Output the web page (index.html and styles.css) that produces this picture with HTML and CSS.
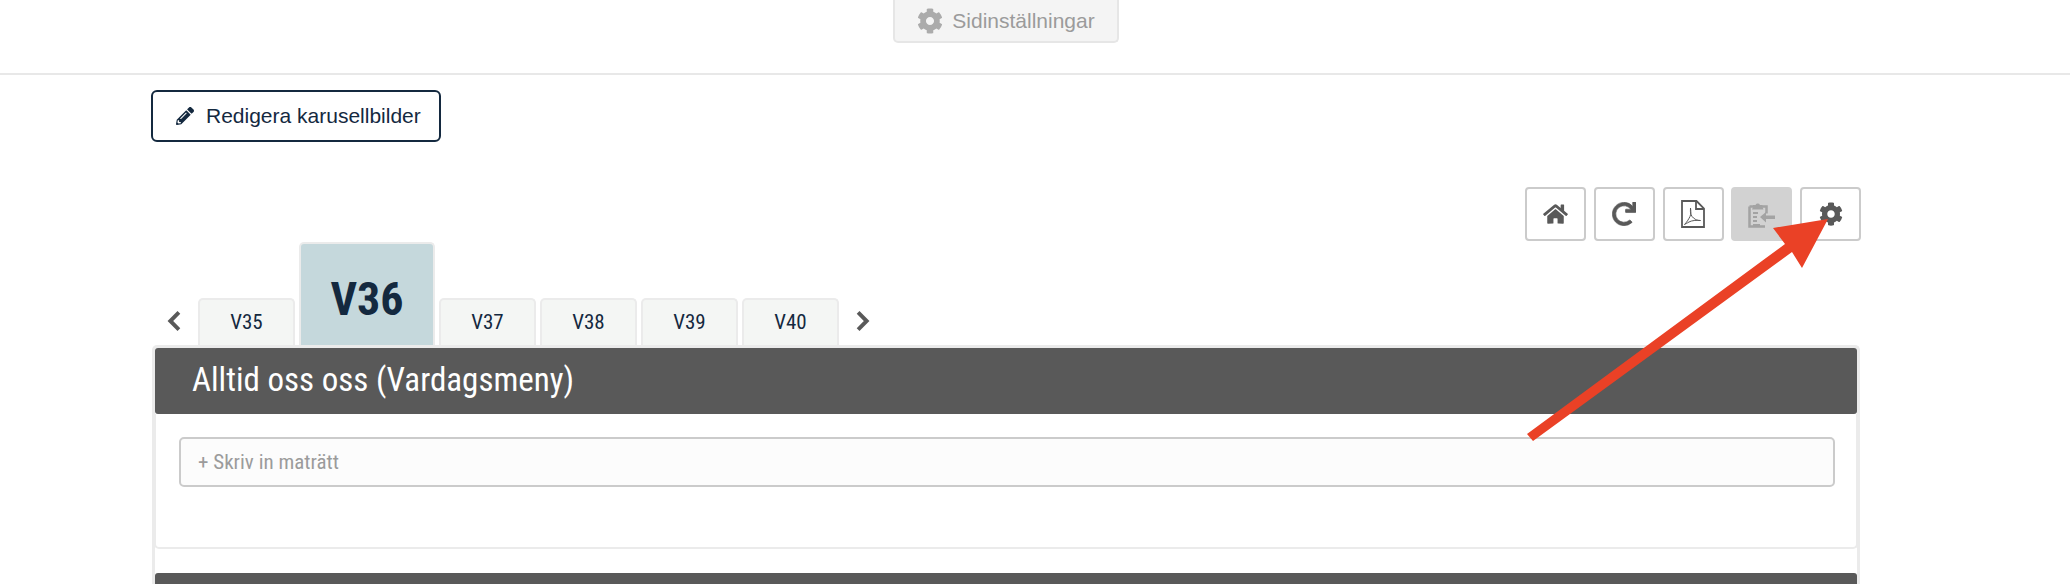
FILE: index.html
```html
<!DOCTYPE html>
<html lang="en">
  <head>
    <meta charset="UTF-8" />
    <title>Sidinställningar</title>
    <link rel="stylesheet" href="styles.css">
  </head>
  <body>
    <div class="topbar">
      <button class="settings-btn">
        <svg class="cog" viewBox="0 0 512 512"><path d="M487.4 315.7l-42.6-24.6c4.3-23.2 4.3-47 0-70.2l42.6-24.6c4.9-2.8 7.1-8.6 5.5-14-11.1-35.6-30-67.8-54.7-94.6-3.8-4.1-10-5.1-14.8-2.3L380.8 110c-17.9-15.4-38.5-27.3-60.8-35.1V25.8c0-5.6-3.9-10.5-9.4-11.7-36.7-8.2-74.3-7.8-109.2 0-5.5 1.2-9.4 6.1-9.4 11.7V75c-22.2 7.9-42.8 19.8-60.8 35.1L88.7 85.5c-4.9-2.8-11-1.9-14.8 2.3-24.7 26.7-43.6 58.9-54.7 94.6-1.7 5.4.6 11.2 5.5 14L67.3 221c-4.3 23.2-4.3 47 0 70.2l-42.6 24.6c-4.9 2.8-7.1 8.6-5.5 14 11.1 35.6 30 67.8 54.7 94.6 3.8 4.1 10 5.1 14.8 2.3l42.6-24.6c17.9 15.4 38.5 27.3 60.8 35.1v49.2c0 5.6 3.9 10.5 9.4 11.7 36.7 8.2 74.3 7.8 109.2 0 5.5-1.2 9.4-6.1 9.4-11.7v-49.2c22.2-7.9 42.8-19.8 60.8-35.1l42.6 24.6c4.9 2.8 11 1.9 14.8-2.3 24.7-26.7 43.6-58.9 54.7-94.6 1.5-5.5-.7-11.3-5.6-14.1zM256 336c-44.1 0-80-35.9-80-80s35.9-80 80-80 80 35.9 80 80-35.9 80-80 80z"/></svg>
        Sidinställningar
      </button>
    </div>

    <div class="content">
      <button class="edit-btn">
        <svg class="pencil" viewBox="0 0 512 512"><path d="M497.9 142.1l-46.1 46.1c-4.7 4.7-12.3 4.7-17 0l-111-111c-4.7-4.7-4.7-12.3 0-17l46.1-46.1c18.7-18.7 49.1-18.7 67.9 0l60.1 60.1c18.8 18.7 18.8 49.1 0 67.9zM284.2 99.8L21.6 362.4.4 483.9c-2.9 16.4 11.4 30.6 27.8 27.8l121.5-21.3 262.6-262.6c4.7-4.7 4.7-12.3 0-17l-111-111c-4.8-4.7-12.4-4.7-17.1 0zM124.1 339.9c-5.5-5.5-5.5-14.3 0-19.8l154-154c5.5-5.5 14.3-5.5 19.8 0s5.5 14.3 0 19.8l-154 154c-5.5 5.5-14.3 5.5-19.8 0zM88 424h48v36.3l-64.5 11.3-31.1-31.1L51.7 376H88v48z"/></svg>
        Redigera karusellbilder
      </button>

      <div class="tools">
        <button class="tool">
          <svg class="ico-home" viewBox="0 0 576 512"><path d="M280.37 148.26L96 300.11V464a16 16 0 0 0 16 16l112.06-.29a16 16 0 0 0 15.92-16V368a16 16 0 0 1 16-16h64a16 16 0 0 1 16 16v95.64a16 16 0 0 0 16 16.05L464 480a16 16 0 0 0 16-16V300L295.67 148.26a12.19 12.19 0 0 0-15.3 0zM571.6 251.47L488 182.56V44.05a12 12 0 0 0-12-12h-56a12 12 0 0 0-12 12v72.61L318.47 43a48 48 0 0 0-61 0L4.34 251.47a12 12 0 0 0-1.6 16.9l25.5 31A12 12 0 0 0 45.15 301l235.22-193.74a12.19 12.19 0 0 1 15.3 0L530.9 301a12 12 0 0 0 16.9-1.6l25.5-31a12 12 0 0 0-1.7-16.93z"/></svg>
        </button>
        <button class="tool">
          <svg class="ico-redo" viewBox="0 0 512 512"><path d="M500.33 0h-47.41a12 12 0 0 0-12 12.57l4 82.76A247.42 247.42 0 0 0 256 8C119.34 8 8.9 119.53 8 256.19 7.1 393.07 118.08 504 256 504a247.1 247.1 0 0 0 166.18-63.91 12 12 0 0 0 .48-17.43l-34-34a12 12 0 0 0-16.38-.55A176 176 0 1 1 402.1 157.8l-101.53-4.87a12 12 0 0 0-12.57 12v47.41a12 12 0 0 0 12 12h200.33a12 12 0 0 0 12-12V12a12 12 0 0 0-12-12z"/></svg>
        </button>
        <button class="tool">
          <svg class="ico-pdf" viewBox="0 0 24 28">
            <path class="pdf-page" d="M1 1h14.500l7.500 7.500V27H1z"/>
            <path class="pdf-page" d="M15 1v8h8"/>
            <path class="pdf-mark" d="M9.500 8c-.5 5 .5 8 3 10s4 2.500 7 2.500c-4-.5-9 0-11.500 1.500-2 1.200-3.500 2-4.500 2.500 2-2 4-5 5.500-8 1-2.500 1-5 .5-8.500z"/>
          </svg>
        </button>
        <button class="tool tool-active">
          <svg class="ico-clip" viewBox="0 0 27 27">
            <path class="clip-line" d="M1.500 5.500h17v7M17 25.500H1.500v-20"/>
            <path class="clip-fill" d="M5 6V4h2.500a2.500 2.500 0 0 1 4.500 0h2.500v2l1 2.500H4z"/>
            <path class="clip-line clip-thin" d="M5 12h5M5 16h4M5 20h4M5 24h7"/>
            <path class="clip-fill" d="M12 16l6-5v3.500h9v3.500h-9v3.500z"/>
          </svg>
        </button>
        <button class="tool">
          <svg class="ico-cog" viewBox="0 0 512 512"><path d="M487.4 315.7l-42.6-24.6c4.3-23.2 4.3-47 0-70.2l42.6-24.6c4.9-2.8 7.1-8.6 5.5-14-11.1-35.6-30-67.8-54.7-94.6-3.8-4.1-10-5.1-14.8-2.3L380.8 110c-17.9-15.4-38.5-27.3-60.8-35.1V25.8c0-5.6-3.9-10.5-9.4-11.7-36.7-8.2-74.3-7.8-109.2 0-5.5 1.2-9.4 6.1-9.4 11.7V75c-22.2 7.9-42.8 19.8-60.8 35.1L88.7 85.5c-4.9-2.8-11-1.9-14.8 2.3-24.7 26.7-43.6 58.9-54.7 94.6-1.7 5.4.6 11.2 5.5 14L67.3 221c-4.3 23.2-4.3 47 0 70.2l-42.6 24.6c-4.9 2.8-7.1 8.6-5.5 14 11.1 35.6 30 67.8 54.7 94.6 3.8 4.1 10 5.1 14.8 2.3l42.6-24.6c17.9 15.4 38.5 27.3 60.8 35.1v49.2c0 5.6 3.9 10.5 9.4 11.7 36.7 8.2 74.3 7.8 109.2 0 5.5-1.2 9.4-6.1 9.4-11.7v-49.2c22.2-7.9 42.8-19.8 60.8-35.1l42.6 24.6c4.9 2.8 11 1.9 14.8-2.3 24.7-26.7 43.6-58.9 54.7-94.6 1.5-5.5-.7-11.3-5.6-14.1zM256 336c-44.1 0-80-35.9-80-80s35.9-80 80-80 80 35.9 80 80-35.9 80-80 80z"/></svg>
        </button>
      </div>

      <div class="weeks">
        <svg class="chev" viewBox="0 0 14 18"><path d="M11 2L4 9l7 7"/></svg>
        <div class="week">V35</div>
        <div class="week week-current">V36</div>
        <div class="week">V37</div>
        <div class="week">V38</div>
        <div class="week">V39</div>
        <div class="week">V40</div>
        <svg class="chev chev-next" viewBox="0 0 14 18"><path d="M3 2l7 7-7 7"/></svg>
      </div>

      <div class="menus">
        <div class="menu">
          <h2 class="menu-title">Alltid oss oss (Vardagsmeny)</h2>
          <div class="menu-body">
            <input class="dish" type="text" placeholder="+ Skriv in maträtt">
          </div>
        </div>
        <div class="menu">
          <h2 class="menu-title"></h2>
        </div>
      </div>
    </div>

    <!-- arrow drawn on top of the screenshot -->
    <svg class="arrow" viewBox="0 0 2070 584"><polygon points="1527,434 1533,441 1792,252 1802,268 1828,219 1773,228 1785,244"/></svg>
  </body>
</html>
```

FILE: styles.css
```css
* {
  margin: 0;
  padding: 0;
  box-sizing: border-box;
}

html, body {
  height: 100%;
  overflow: hidden;
}

body {
  background: #fff;
  font-family: "Liberation Sans", Arial, sans-serif;
  position: relative;
}

button {
  font-family: inherit;
  cursor: pointer;
}

.topbar {
  height: 75px;
  padding-right: 58px;
  border-bottom: 2px solid #e8e8e8;
  display: flex;
  justify-content: center;
}

.settings-btn {
  width: 226px;
  height: 43px;
  background: #f4f4f4;
  border: 2px solid #e6e6e6;
  border-top: 0;
  border-radius: 0 0 5px 5px;
  color: #9b9b9b;
  font-size: 21px;
  display: flex;
  align-items: center;
  justify-content: center;
  gap: 9px;
}

.cog {
  width: 26px;
  height: 26px;
  fill: #ababab;
}

.content {
  padding: 15px 209px 0 151px;
}

.edit-btn {
  width: 290px;
  height: 52px;
  padding-left: 23px;
  background: #fff;
  border: 2px solid #14293f;
  border-radius: 6px;
  color: #14293f;
  font-size: 21px;
  display: flex;
  align-items: center;
  gap: 12px;
}

.pencil {
  width: 18px;
  height: 18px;
  fill: #14293f;
}

.tools {
  display: flex;
  justify-content: flex-end;
  gap: 7.75px;
  margin-top: 45px;
}

.tool {
  width: 61px;
  height: 54px;
  background: #fff;
  border: 2px solid #cbcbcb;
  border-radius: 4px;
  display: flex;
  align-items: center;
  justify-content: center;
  fill: #595959;
}

.tool-active {
  background: #d2d2d2;
  border-color: #d2d2d2;
}

.ico-home { width: 25px; height: 22px; }
.ico-redo { width: 24px; height: 24px; stroke: #595959; stroke-width: 14; }
.ico-pdf { width: 24px; height: 28px; }
.ico-clip { width: 27px; height: 27px; }
.ico-cog { width: 24px; height: 24px; }

.pdf-page {
  fill: none;
  stroke: #595959;
  stroke-width: 1.8;
}

.pdf-mark {
  fill: none;
  stroke: #595959;
  stroke-width: 1;
}

.clip-line {
  fill: none;
  stroke: #a3a3a3;
  stroke-width: 2.500;
}

.clip-thin {
  stroke-width: 1.800;
}

.clip-fill {
  fill: #a3a3a3;
}

.weeks {
  display: flex;
  align-items: flex-end;
  gap: 4px;
  height: 103px;
  margin-top: 1px;
  padding-left: 12px;
}

.chev {
  width: 22px;
  height: 22px;
  margin: 0 9px 13px 0;
  fill: none;
  stroke: #595959;
  stroke-width: 3.2;
}

.chev-next {
  margin: 0 0 13px 9px;
}

.week {
  width: 97px;
  height: 47px;
  padding-top: 10px;
  background: #f4f6f4;
  border: 2px solid #ebebeb;
  border-bottom: 0;
  border-radius: 5px 5px 0 0;
  color: #14293f;
  font-family: Roboto, sans-serif;
  font-stretch: condensed;
  font-size: 21px;
  text-align: center;
}

.week-current {
  width: 136px;
  height: 103px;
  padding-top: 32px;
  background: #c5d8dc;
  font-size: 46px;
  font-weight: 700;
  line-height: 1;
}

.menus {
  border: 3px solid #ebebeb;
  border-bottom: 0;
  border-radius: 5px 5px 0 0;
  width: 1708px;
  margin-left: 1px;
}

.menu-title {
  height: 66px;
  padding: 0 0 0 37px;
  background: #595959;
  border-radius: 3px;
  color: #fff;
  font-family: Roboto, sans-serif;
  font-stretch: condensed;
  font-size: 33px;
  font-weight: 400;
  line-height: 64px;
}

.menu-body {
  height: 135px;
  padding: 23px 23px 0 23px;
  border: 2px solid #ebebeb;
  border-top: 0;
  border-radius: 0 0 5px 5px;
  margin-bottom: 24px;
  margin-left: -1px;
  margin-right: -1px;
}

.dish {
  display: block;
  width: 1656px;
  height: 50px;
  padding: 0 17px;
  background: #fcfcfc;
  border: 2px solid #cbcbcb;
  border-radius: 5px;
  font-family: Roboto, sans-serif;
  font-stretch: condensed;
  font-size: 21px;
  outline: none;
}

.dish::placeholder {
  color: #9b9b9b;
}

.arrow {
  position: absolute;
  top: 0;
  left: 0;
  width: 2070px;
  height: 584px;
  pointer-events: none;
}

.arrow polygon {
  fill: #ea4126;
}
```
